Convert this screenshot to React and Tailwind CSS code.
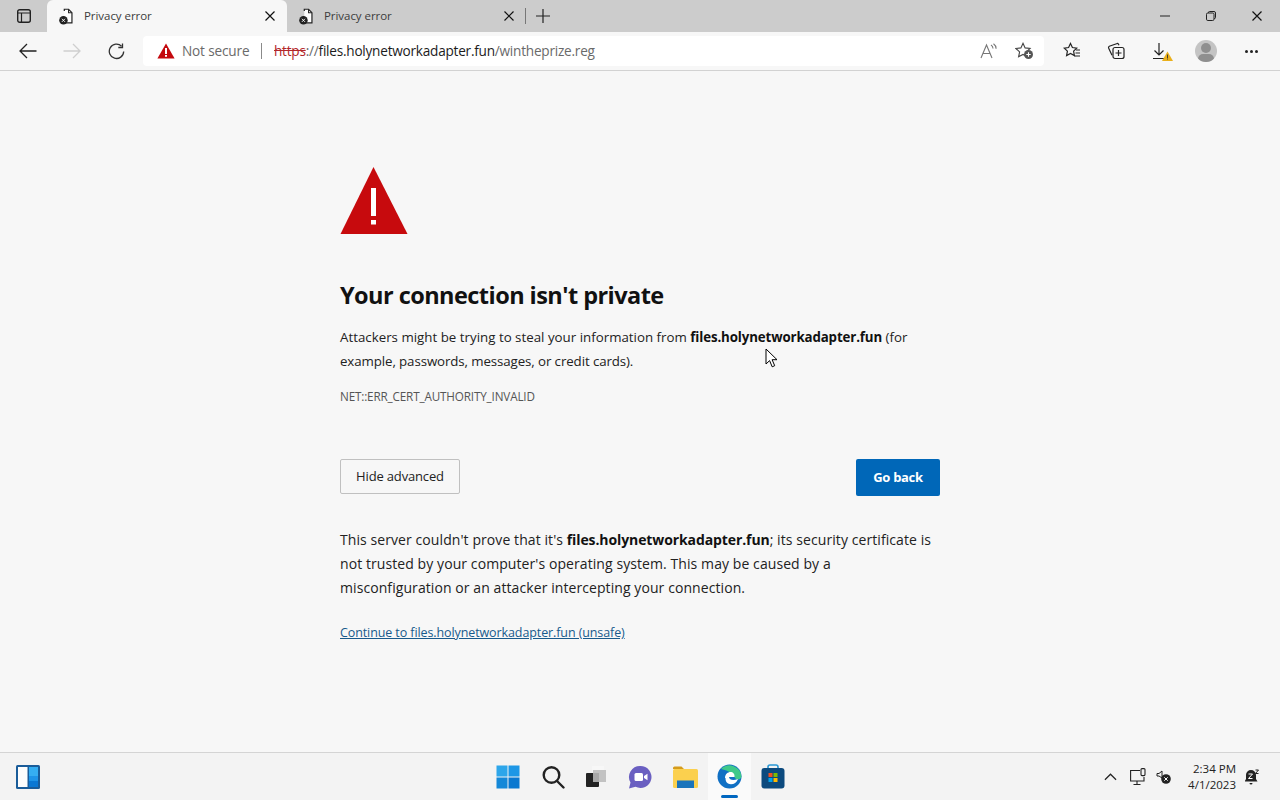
import React from "react";

const F = { fontFamily: '"Open Sans", "Noto Sans", sans-serif' };

function DocIcon() {
  return (
    <svg width="16" height="17" viewBox="0 0 18 20" fill="none">
      <path d="M7 3.5V1.5h5l4 4v12h-9" stroke="#222" strokeWidth="1.4" fill="#fff" />
      <path d="M12 1.5v4h4" stroke="#222" strokeWidth="1.2" />
      <circle cx="6" cy="14.5" r="5" fill="#222" />
      <path d="M4.2 12.7l3.6 3.6M7.800 12.7l-3.600 3.600" stroke="#fff" strokeWidth="1.1" />
    </svg>
  );
}

function CloseX({ size = 10 }) {
  return (
    <svg width={size} height={size} viewBox="0 0 10 10" stroke="#111" strokeWidth="1.2">
      <path d="M0.5 0.5l9 9M9.5 0.5l-9 9" />
    </svg>
  );
}

function Tab({ active }) {
  return (
    <div className={`flex items-center h-full pl-[11px] ${active ? "w-[240px] pr-[12px] bg-[#f7f7f7] rounded-t-[6px]" : "w-[238px] pr-[11px]"}`}>
      <DocIcon />
      <span className="ml-[10px] text-[11.5px] text-[#3c3c3c] flex-1 tracking-[-0.05px]">Privacy error</span>
      <CloseX />
    </div>
  );
}

function TabStrip() {
  return (
    <div className="h-[32px] bg-[#cccccc] flex items-end">
      <div className="w-[47px] h-full flex items-center justify-center">
        <svg width="16" height="16" viewBox="0 0 16 16" fill="none" stroke="#222" strokeWidth="1.4">
          <rect x="1.7" y="1.7" width="12.6" height="12.6" rx="2" />
          <path d="M1.7 5h12.6M5.5 5v9.3" strokeWidth="1.2" />
        </svg>
      </div>
      <Tab active />
      <Tab />
      <div className="w-px h-[16px] bg-[#777] self-center" />
      <div className="w-[34px] h-full flex items-center justify-center">
        <svg width="14" height="14" viewBox="0 0 14 14" stroke="#222" strokeWidth="1.2">
          <path d="M7 0v14M0 7h14" />
        </svg>
      </div>
      <div className="flex-1" />
      <div className="h-full flex items-center text-[#222]">
        <div className="w-[46px] flex justify-center">
          <svg width="10" height="10" viewBox="0 0 10 10" stroke="#222" strokeWidth="1"><path d="M0 5h10" /></svg>
        </div>
        <div className="w-[46px] flex justify-center">
          <svg width="10" height="10" viewBox="0 0 10 10" fill="none" stroke="#222" strokeWidth="1">
            <rect x="0.5" y="2" width="7.5" height="7.5" rx="1.3" />
            <path d="M2.5 2V1.6A1 1 0 0 1 3.5.5H8A1.5 1.5 0 0 1 9.5 2v4.5a1 1 0 0 1-1 1H8" />
          </svg>
        </div>
        <div className="w-[46px] flex justify-center"><CloseX /></div>
      </div>
    </div>
  );
}

function Toolbar() {
  return (
    <div className="h-[39px] bg-[#f7f7f7] border-b border-[#d2d2d2] flex items-center">
      <div className="w-[143px] flex items-center shrink-0 pl-[19px]">
        <svg width="18" height="16" viewBox="0 0 18 16" fill="none" stroke="#222" strokeWidth="1.3">
          <path d="M17.5 8H1.2M8 1L1 8l7 7" />
        </svg>
        <svg className="ml-[26px]" width="18" height="16" viewBox="0 0 18 16" fill="none" stroke="#cfcfcf" strokeWidth="1.3">
          <path d="M.5 8h16.3M10 1l7 7-7 7" />
        </svg>
        <svg className="ml-[27px]" width="17" height="17" viewBox="0 0 17 17" fill="none" stroke="#333" strokeWidth="1.3">
          <path d="M13.6 3.2A7.2 7.2 0 1 0 15.7 8.5" />
          <path d="M14.5 .5v4h-4.2" />
        </svg>
      </div>
      <div className="w-[901px] h-[30px] bg-white rounded-[4px] flex items-center shrink-0 relative">
        <svg className="ml-[14px] shrink-0" width="18" height="16" viewBox="0 0 18 16">
          <path d="M9 .5L17.6 15.5H.4z" fill="#c4090e" />
          <path d="M8 5h2v6H8zM8 12h2v1.800H8z" fill="#fff" />
        </svg>
        <span className="ml-[7px] text-[13.6px] text-[#6a6a6a] w-[67px] whitespace-nowrap tracking-[-0.15px] shrink-0">Not secure</span>
        <div className="ml-[12px] w-px h-[16px] bg-[#8a8a8a]" />
        <span className="ml-[12px] text-[13.6px] tracking-[-0.23px] whitespace-nowrap">
          <span className="text-[#b3272b] line-through">https</span>
          <span className="text-[#6a6a6a]">://</span>
          <span className="text-[#1c1c1c]">files.holynetworkadapter.fun</span>
          <span className="text-[#6a6a6a]">/wintheprize.reg</span>
        </span>
        <div className="flex-1" />
        <svg className="mr-[18px]" width="17" height="16" viewBox="0 0 17 16" fill="none" stroke="#777" strokeWidth="1.1">
          <path d="M1 15L6.5 2 12 15M3 10.5h7" />
          <path d="M11 2q2 1.2 2 3.5M13.5.8q2.6 1.8 2.6 5" />
        </svg>
        <svg className="mr-[10px]" width="19" height="18" viewBox="0 0 19 18" fill="none">
          <path d="M8 1.3l2.1 4.6 5 .6-3.7 3.4 1 4.9L8 12.4l-4.4 2.4 1-4.9L.9 6.5l5-.6z" stroke="#444" strokeWidth="1.1" />
          <circle cx="13.5" cy="12.5" r="4.5" fill="#555" />
          <path d="M13.5 10.3v4.4M11.3 12.5h4.4" stroke="#fff" strokeWidth="1.1" />
        </svg>
      </div>
      <div className="flex-1 flex items-center pl-[19px]">
        <svg width="18" height="18" viewBox="0 0 18 18" fill="none" stroke="#222" strokeWidth="1.2">
          <path d="M7.5 1.5l1.9 4 4.3.6-3.1 3 .8 4.5-3.9-2.2-3.9 2.2.8-4.5-3.1-3 4.3-.6z" />
          <path d="M13 8h4M12.5 11h4.5M11.5 14H17" />
        </svg>
        <svg className="ml-[26px]" width="18" height="18" viewBox="0 0 18 18" fill="none" stroke="#222" strokeWidth="1.2">
          <rect x="6" y="5.5" width="11" height="11" rx="2" />
          <path d="M11.5 8v6M8.5 11h6" />
          <path d="M12 3.2l-.5-.9a1.5 1.5 0 0 0-2-.6L2.3 4.2a1.5 1.5 0 0 0-.6 2l3.3 7" />
        </svg>
        <svg className="ml-[27px]" width="22" height="21" viewBox="0 0 22 21" fill="none">
          <path d="M7 2v12M2.5 9.5L7 14l4.5-4.5M1 17.5h12" stroke="#222" strokeWidth="1.2" />
          <path d="M15.5 10.5l5.5 9.5H10z" fill="#eab01c" />
          <path d="M15.1 13.5h.9v3.5h-.9zM15.1 17.6h.9v1h-.9z" fill="#333" />
        </svg>
        <div className="ml-[21px] w-[22px] h-[22px] rounded-full bg-[#c4c4c4] overflow-hidden relative shrink-0">
          <div className="absolute left-[6px] top-[3px] w-[10px] h-[10px] rounded-full bg-[#8f8f8f]" />
          <div className="absolute left-[3px] top-[14px] w-[16px] h-[10px] rounded-full bg-[#8f8f8f]" />
        </div>
        <div className="ml-[28px] flex gap-[2px]">
          <div className="w-[3px] h-[3px] rounded-full bg-[#222]" />
          <div className="w-[3px] h-[3px] rounded-full bg-[#222]" />
          <div className="w-[3px] h-[3px] rounded-full bg-[#222]" />
        </div>
      </div>
    </div>
  );
}

function ErrorPage() {
  return (
    <div className="flex-1 bg-[#f7f7f7] relative">
      <div className="w-[600px] ml-[340px] pt-[95px] text-[#1a1a1a]">
        <svg width="68" height="68" viewBox="0 0 68 68" className="block">
          <path d="M33.500 1L67.500 68H.5z" fill="#c70a0d" />
          <path d="M31 22h5v28h-5zM31 54h5v4.500h-5z" fill="#fff" />
        </svg>
        <h1 className="mt-[45px] text-[23.5px] leading-[32px] font-bold text-[#111] tracking-[-0.55px]">Your connection isn't private</h1>
        <p className="mt-[14px] text-[13.3px] leading-[24px] text-[#222]">
          <span className="tracking-[0.01px]">Attackers might be trying to steal your information from </span><b className="font-bold text-[#111] tracking-[-0.13px]">files.holynetworkadapter.fun</b> (for<br /><span className="tracking-[-0.1px]">example, passwords, messages, or credit cards).</span>
        </p>
        <p className="mt-[15px] text-[11.7px] leading-[16px] text-[#555] tracking-[-0.15px]">NET::ERR_CERT_AUTHORITY_INVALID</p>
        <div className="mt-[55px] flex justify-between items-start">
          <div className="w-[120px] h-[35px] border border-[#c0c0c0] rounded-[2px] flex items-center justify-center text-[13px] text-[#222] tracking-[-0.16px] pt-px">Hide advanced</div>
          <div className="w-[84px] h-[37px] bg-[#0067b8] rounded-[2px] flex items-center justify-center text-[13px] font-bold text-white tracking-[-0.3px] pt-px">Go back</div>
        </div>
        <p className="mt-[32px] text-[14px] leading-[24px] text-[#222] tracking-[0.08px]">
          This server couldn't prove that it's <b className="font-bold text-[#111] tracking-[-0.1px]">files.holynetworkadapter.fun</b>; its security certificate is<br />not trusted by your computer's operating system. This may be caused by a<br />misconfiguration or an attacker intercepting your connection.
        </p>
        <p className="mt-[23px] text-[12.5px] leading-[20px] text-[#185a8c] underline tracking-[-0.1px]">Continue to files.holynetworkadapter.fun (unsafe)</p>
      </div>
      <svg className="absolute left-[765px] top-[277px]" width="13" height="21" viewBox="0 0 13 21">
        <path d="M1 1v15l3.6-3.4 2.6 6.2 2.5-1.1-2.6-6h4.9z" fill="#fff" stroke="#000" strokeWidth="1" />
      </svg>
    </div>
  );
}

function Taskbar() {
  return (
    <div className="h-[48px] bg-[#f3f3f3] border-t border-[#d4d4d4] flex items-center relative">
      <svg className="ml-[16px]" width="24" height="24" viewBox="0 0 24 24">
        <rect x="0" y="0" width="24" height="24" rx="1.5" fill="#1a5c99" />
        <rect x="2" y="2" width="9.5" height="20" fill="#fdfdfd" />
        <rect x="13" y="2" width="9" height="9" fill="#35aef2" />
        <rect x="13" y="11" width="9" height="5" fill="#1e94e8" />
        <rect x="13" y="16" width="9" height="6" fill="#0a78d4" />
      </svg>
      <div className="absolute left-[485px] top-0 h-full flex items-center">
        <div className="w-[45px] h-full flex items-center justify-center">
          <svg width="24" height="24" viewBox="0 0 24 24">
            <rect x="0.5" y="0.5" width="11" height="11" fill="#2da6ea" />
            <rect x="12.5" y="0.5" width="11" height="11" fill="#1d97e6" />
            <rect x="0.5" y="12.5" width="11" height="11" fill="#1488d8" />
            <rect x="12.5" y="12.5" width="11" height="11" fill="#0a78d0" />
          </svg>
        </div>
        <div className="w-[45px] h-full flex items-center justify-center">
          <svg width="24" height="24" viewBox="0 0 24 24" fill="none" stroke="#222" strokeWidth="2.4">
            <circle cx="10.5" cy="10" r="7.8" />
            <path d="M16 16l6.5 6.5" strokeLinecap="round" />
          </svg>
        </div>
        <div className="w-[42px] h-full flex items-center justify-center">
          <svg width="20" height="21" viewBox="0 0 20 21">
            <rect x="6" y="0" width="12" height="9" fill="#f7f7f7" />
            <rect x="7" y="4" width="13" height="12" fill="#c2c2c2" />
            <rect x="0" y="7" width="13" height="14" rx="1" fill="#222" />
            <rect x="7" y="7" width="6" height="9" fill="#a8a8a8" />
          </svg>
        </div>
        <div className="w-[45px] h-full flex items-center justify-center">
          <svg width="24" height="24" viewBox="0 0 24 24">
            <path d="M12.5 1a11 11 0 1 1-5 20.8L1 23.5l1.5-6A11 11 0 0 1 12.5 1z" fill="#6a5fc1" />
            <rect x="6.5" y="8" width="8.5" height="8" rx="1.5" fill="#fff" />
            <path d="M16 11l3.5-2.3v6.6L16 13z" fill="#fff" />
          </svg>
        </div>
        <div className="w-[46px] h-full flex items-center justify-center">
          <svg width="25" height="22" viewBox="0 0 25 22">
            <path d="M0 2a1.5 1.5 0 0 1 1.5-1.5h7L11 3h-11z" fill="#d59b1b" />
            <rect x="0" y="3" width="25" height="19" rx="1.5" fill="#fbd04e" />
            <path d="M4 14.5h17V22H4z" fill="#1b74bb" />
          </svg>
        </div>
        <div className="w-[43px] h-full flex items-center justify-center bg-[#fafafa] relative">
          <svg width="25" height="25" viewBox="0 0 25 25">
            <circle cx="12.5" cy="12.5" r="12" fill="#1170c4" />
            <path d="M4 5a12 12 0 0 1 20.500 7.500c-.5 3.500-6 4-7 .5-1-3-5.500-6.500-13.500-8z" fill="#3fc98a" />
            <path d="M8 14c0-4 3-6 5.500-6s4.500 2 4 5h-5.500c.3 3 4 4 9 2-1.500 4.500-6.500 6.500-10 4.500-2-1.200-2.500-3-2.500-5.500z" fill="#fff" />
          </svg>
          <div className="absolute bottom-[2px] left-[13px] w-[17px] h-[3px] rounded-full bg-[#0067c0]" />
        </div>
        <div className="w-[43px] h-full flex items-center justify-center">
          <svg width="24" height="25" viewBox="0 0 24 25">
            <path d="M7 5V3a2 2 0 0 1 2-2h6a2 2 0 0 1 2 2v2" fill="none" stroke="#2a98d5" strokeWidth="1.6" />
            <rect x="0.5" y="4" width="23" height="20.500" rx="3" fill="#0c4a7e" />
            <rect x="7.500" y="9" width="4" height="4" fill="#f25022" />
            <rect x="12.500" y="9" width="4" height="4" fill="#7fba00" />
            <rect x="7.500" y="14" width="4" height="4" fill="#00a4ef" />
            <rect x="12.500" y="14" width="4" height="4" fill="#ffb900" />
          </svg>
        </div>
      </div>
      <div className="flex-1" />
      <div className="flex items-center">
        <svg width="13" height="8" viewBox="0 0 14 8" fill="none" stroke="#222" strokeWidth="1.3"><path d="M1 7l6-6 6 6" /></svg>
        <svg className="ml-[13px]" width="16" height="17" viewBox="0 0 16 17" fill="none" stroke="#222" strokeWidth="1.1">
          <path d="M10 2.500H.6v10.500H14V9" />
          <path d="M7 13v3M3.500 16.500h7" />
          <rect x="11" y=".6" width="4" height="7" rx="1" />
        </svg>
        <svg className="ml-[10px]" width="15" height="15" viewBox="0 0 15 15">
          <path d="M1 4.500h2L6 2v7L3 7H1z" fill="none" stroke="#222" strokeWidth="1" />
          <circle cx="10" cy="10" r="4.800" fill="#222" />
          <path d="M8.300 8.300l3.400 3.400M11.700 8.300l-3.400 3.400" stroke="#fff" strokeWidth="1" />
        </svg>
        <div className="ml-[18px] w-[47px] flex flex-col items-end text-[11.5px] leading-[16px] text-[#222] whitespace-nowrap">
          <span>2:34 PM</span>
          <span>4/1/2023</span>
        </div>
        <svg className="ml-[9px] mr-[20px]" width="15" height="16" viewBox="0 0 15 16">
          <path d="M6 1a5 5 0 0 1 5 5v4l1.500 2.500h-13L1 10V6a5 5 0 0 1 5-5z" fill="#222" />
          <path d="M4.500 14h3a1.500 1.500 0 0 1-3 0z" fill="#222" />
          <path d="M3.500 5h4l-4 4.500h4" stroke="#fff" strokeWidth="1" fill="none" />
          <path d="M10.500 1h3l-3 3.500h3" stroke="#222" strokeWidth="1" fill="none" />
        </svg>
      </div>
    </div>
  );
}

export default function App() {
  return (
    <div className="w-[1280px] h-[800px] flex flex-col overflow-hidden" style={F}>
      <TabStrip />
      <Toolbar />
      <ErrorPage />
      <Taskbar />
    </div>
  );
}
